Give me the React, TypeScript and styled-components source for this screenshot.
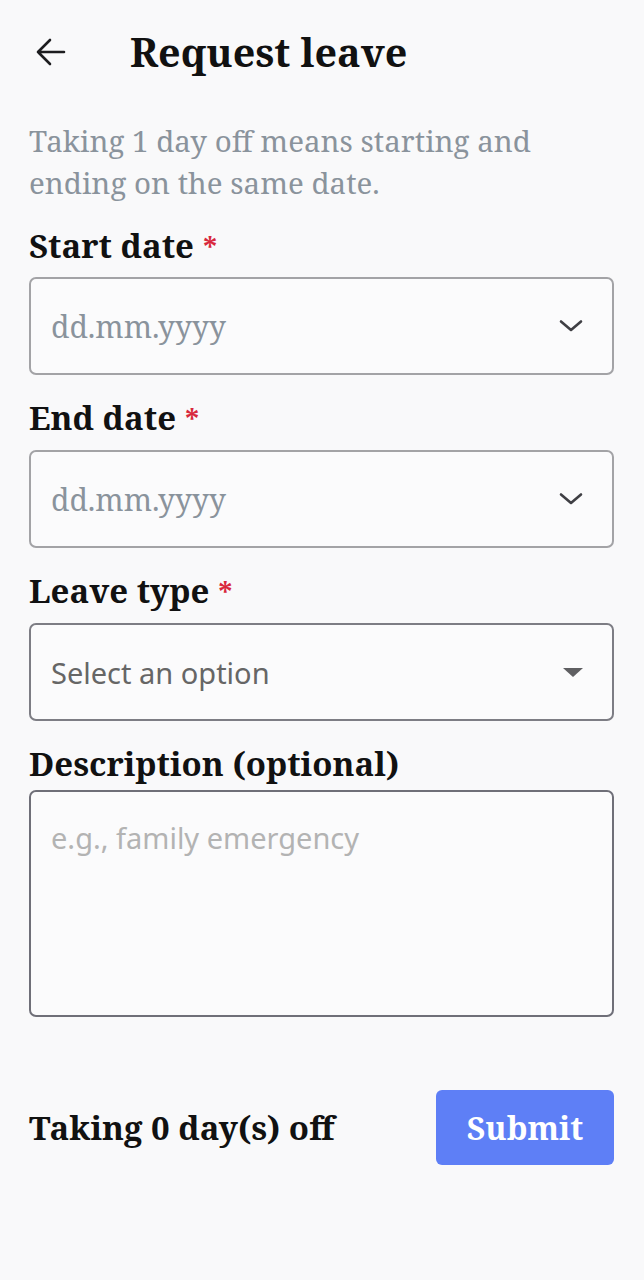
import React from "react";
import styled, { createGlobalStyle } from "styled-components";

const GlobalStyle = createGlobalStyle`
  html, body { margin: 0; padding: 0; background: #f9f9fa; }
  * { box-sizing: border-box; }
`;

const serif = `"Noto Serif", "DejaVu Serif", serif`;
const sans = `"Noto Sans", Roboto, sans-serif`;

const Page = styled.div`
  min-height: 1280px;
  background: #f9f9fa;
  padding: 0 30px 0 29px;
  display: flex;
  flex-direction: column;
  font-family: ${serif};
`;

const Header = styled.header`
  height: 104px;
  display: flex;
  align-items: center;
  gap: 63px;
  padding-left: 6px;
`;

const BackButton = styled.button`
  width: 32px;
  height: 40px;
  padding: 0;
  border: none;
  background: transparent;
  display: flex;
  align-items: center;
  justify-content: center;
  color: #1d1d1f;
`;

const Title = styled.h1`
  margin: 0;
  font-family: ${serif};
  font-weight: 700;
  font-size: 39.5px;
  color: #111;
`;

const Hint = styled.p`
  margin: 16px 0 0;
  font-size: 29.5px;
  line-height: 42px;
  color: #8a939c;
  font-family: ${serif};
`;

const Field = styled.div<{ $top: number }>`
  display: flex;
  flex-direction: column;
  margin-top: ${(p) => p.$top}px;
`;

const Label = styled.label<{ $gap: number }>`
  font-family: ${serif};
  font-weight: 700;
  font-size: 33px;
  line-height: 40px;
  color: #111;
  margin-bottom: ${(p) => p.$gap}px;
`;

const Required = styled.span`
  color: #d8283c;
  margin-left: 9px;
  font-size: 28px;
`;

const Box = styled.div<{ $border: string; $height: number }>`
  height: ${(p) => p.$height}px;
  border: 2px solid ${(p) => p.$border};
  border-radius: 7px;
  background: #fbfbfc;
  display: flex;
  align-items: center;
  justify-content: space-between;
  padding: 0 29px 0 20px;
`;

const AreaBox = styled(Box)`
  align-items: flex-start;
  padding-top: 26px;
`;

const DatePlaceholder = styled.span`
  font-family: ${serif};
  font-size: 30px;
  color: #8a939c;
`;

const SelectText = styled.span`
  font-family: ${sans};
  font-size: 29px;
  color: #666;
`;

const AreaPlaceholder = styled.span`
  font-family: ${sans};
  font-size: 29px;
  color: #b3b3b3;
`;

const Footer = styled.div`
  margin-top: 73px;
  display: flex;
  align-items: center;
  justify-content: space-between;
`;

const DaysText = styled.span`
  font-family: ${serif};
  font-weight: 700;
  font-size: 33px;
  color: #111;
`;

const SubmitButton = styled.button`
  width: 178px;
  height: 75px;
  border: none;
  border-radius: 6px;
  background: #5e7ff6;
  color: #fff;
  font-family: ${serif};
  font-weight: 700;
  font-size: 32px;
`;

const Chevron = () => (
  <svg width="24" height="24" viewBox="0 0 24 24" fill="none" stroke="#3f3f44" strokeWidth="2.6" strokeLinecap="round" strokeLinejoin="round">
    <path d="M2 7.5l10 8.5 10-8.5" />
  </svg>
);

const Caret = () => (
  <svg width="20" height="10" viewBox="0 0 20 10">
    <path d="M0 1h20l-10 9z" fill="#5f5f62" />
  </svg>
);

const Arrow = () => (
  <svg width="32" height="32" viewBox="0 0 32 32" fill="none" stroke="#1d1d1f" strokeWidth="2.6" strokeLinecap="round" strokeLinejoin="round">
    <path d="M29 16H3M15 4L3 16l12 12" />
  </svg>
);

export default function App() {
  return (
    <>
      <GlobalStyle />
      <Page>
        <Header>
          <BackButton aria-label="Back">
            <Arrow />
          </BackButton>
          <Title>Request leave</Title>
        </Header>
        <Hint>Taking 1 day off means starting and ending on the same date.</Hint>
        <Field $top={22}>
          <Label $gap={10}>
            Start date<Required>*</Required>
          </Label>
          <Box $border="#a3a3a6" $height={98}>
            <DatePlaceholder>dd.mm.yyyy</DatePlaceholder>
            <Chevron />
          </Box>
        </Field>
        <Field $top={23}>
          <Label $gap={11}>
            End date<Required>*</Required>
          </Label>
          <Box $border="#a3a3a6" $height={98}>
            <DatePlaceholder>dd.mm.yyyy</DatePlaceholder>
            <Chevron />
          </Box>
        </Field>
        <Field $top={23}>
          <Label $gap={11}>
            Leave type<Required>*</Required>
          </Label>
          <Box $border="#7d7d84" $height={98}>
            <SelectText>Select an option</SelectText>
            <Caret />
          </Box>
        </Field>
        <Field $top={23}>
          <Label $gap={6}>Description (optional)</Label>
          <AreaBox $border="#6f6f78" $height={227}>
            <AreaPlaceholder>e.g., family emergency</AreaPlaceholder>
          </AreaBox>
        </Field>
        <Footer>
          <DaysText>Taking 0 day(s) off</DaysText>
          <SubmitButton>Submit</SubmitButton>
        </Footer>
      </Page>
    </>
  );
}
